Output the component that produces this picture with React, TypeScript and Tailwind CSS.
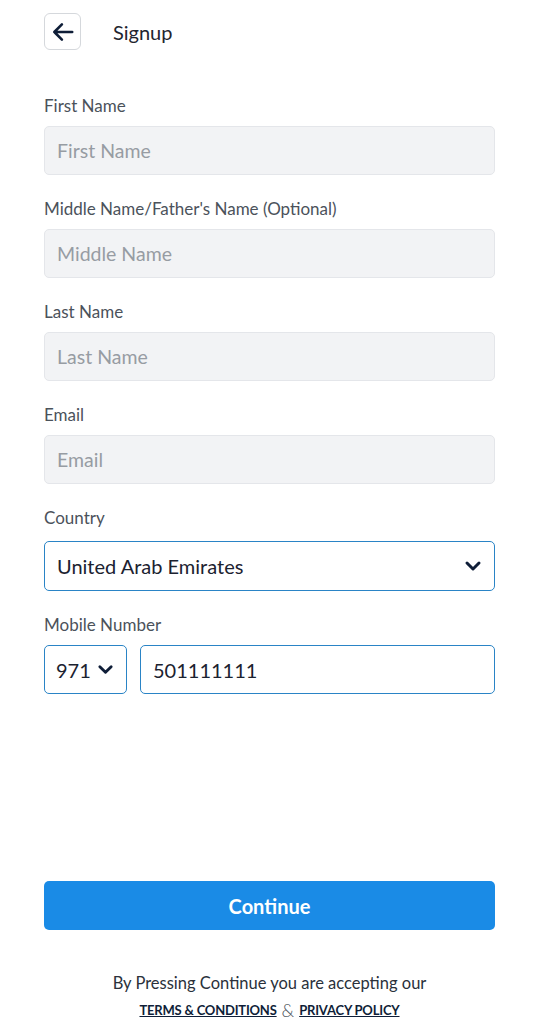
import { useState } from "react";

const font = { fontFamily: "Lato, 'Open Sans', sans-serif" };

function Chevron({ size = 18 }: { size?: number }) {
  return (
    <svg width={size} height={size} viewBox="0 0 24 24" fill="none">
      <path d="M4 8l8 8 8-8" stroke="#0f1e38" strokeWidth={4} strokeLinecap="round" strokeLinejoin="round" />
    </svg>
  );
}

function Field({ label, placeholder }: { label: string; placeholder: string }) {
  return (
    <div className="flex flex-col">
      <label className="text-[17px] leading-[22px] text-[#4b525b]">{label}</label>
      <input
        placeholder={placeholder}
        className="mt-[9px] h-[49px] w-full rounded-[5px] border border-[#e4e6ea] bg-[#f2f3f5] px-[12px] text-[19.5px] text-[#1f2937] outline-none placeholder:text-[#979ca3]"
        style={font}
      />
    </div>
  );
}

export default function App() {
  const [mobile, setMobile] = useState("501111111");

  return (
    <div className="flex h-[1024px] flex-col bg-white px-[44px] pt-[13px]" style={font}>
      {/* header */}
      <div className="flex items-center">
        <button className="flex h-[37px] w-[37px] items-center justify-center rounded-[6px] border border-[#d5d8dc]">
          <svg width="26" height="26" viewBox="0 0 24 24" fill="none">
            <path d="M20.5 12H4M11 5l-7 7 7 7" stroke="#0f1e38" strokeWidth={2.4} strokeLinecap="round" strokeLinejoin="round" />
          </svg>
        </button>
        <h1 className="ml-[32px] text-[20px] text-[#1f2530]">Signup</h1>
      </div>

      {/* form */}
      <div className="mt-[45px] flex flex-col gap-[23px]">
        <Field label="First Name" placeholder="First Name" />
        <Field label="Middle Name/Father's Name (Optional)" placeholder="Middle Name" />
        <Field label="Last Name" placeholder="Last Name" />
        <Field label="Email" placeholder="Email" />

        <div className="flex flex-col">
          <label className="text-[17px] leading-[22px] text-[#4b525b]">Country</label>
          <div className="mt-[12px] flex h-[50px] items-center justify-between rounded-[5px] border border-[#2a84c6] px-[12px]">
            <span className="text-[20px] text-[#1b2230]">United Arab Emirates</span>
            <Chevron />
          </div>
        </div>

        <div className="flex flex-col">
          <label className="text-[17px] leading-[22px] text-[#4b525b]">Mobile Number</label>
          <div className="mt-[9px] flex gap-[13px]">
            <div className="flex h-[49px] w-[83px] items-center gap-[6px] rounded-[5px] border border-[#2a84c6] px-[11px]">
              <span className="text-[20px] text-[#1b2230]">971</span>
              <Chevron size={17} />
            </div>
            <input
              value={mobile}
              onChange={(e) => setMobile(e.target.value)}
              className="h-[49px] flex-1 rounded-[5px] border border-[#2a84c6] px-[12px] text-[20px] text-[#1b2230] outline-none"
              style={font}
            />
          </div>
        </div>
      </div>

      {/* bottom */}
      <button className="mt-auto h-[49px] w-full rounded-[5px] bg-[#1a8be6] text-[20px] font-bold text-white">
        Continue
      </button>
      <div className="mt-[41px] mb-[2px] flex flex-col items-center">
        <p className="text-[16.5px] leading-[24px] text-[#2a313b]">By Pressing Continue you are accepting our</p>
        <p className="mt-[3px] flex items-center gap-[5px] leading-[24px] text-[#0f1e38]">
          <a className="text-[13px] font-bold tracking-[-0.2px] underline">TERMS &amp; CONDITIONS</a>
          <span className="text-[18px] font-light text-[#4b525b]">&amp;</span>
          <a className="text-[13px] font-bold tracking-[-0.2px] underline">PRIVACY POLICY</a>
        </p>
      </div>
    </div>
  );
}
